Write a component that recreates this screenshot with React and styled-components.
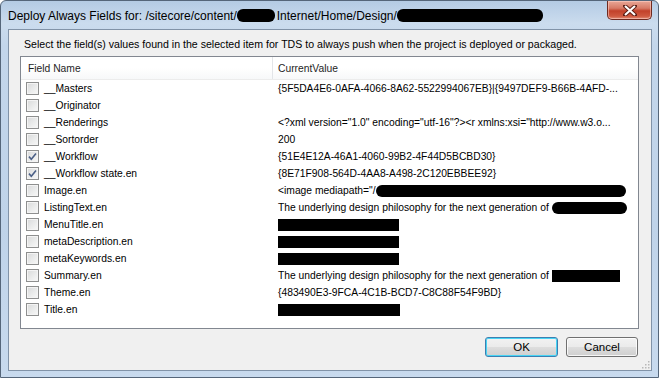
import React from "react";
import styled, { createGlobalStyle } from "styled-components";

const fields = [
  { name: "__Masters", value: ["{5F5DA4E6-0AFA-4066-8A62-5522994067EB}|{9497DEF9-B66B-4AFD-..."] },
  { name: "__Originator", value: [] },
  {
    name: "__Renderings",
    value: ['<?xml version="1.0" encoding="utf-16"?><r xmlns:xsi="http://www.w3.o...'],
  },
  { name: "__Sortorder", value: ["200"] },
  { name: "__Workflow", checked: true, value: ["{51E4E12A-46A1-4060-99B2-4F44D5BCBD30}"] },
  { name: "__Workflow state.en", checked: true, value: ["{8E71F908-564D-4AA8-A498-2C120EBBEE92}"] },
  { name: "Image.en", value: ['<image mediapath="/', { redact: 250, round: true }] },
  {
    name: "ListingText.en",
    value: ["The underlying design philosophy for the next generation of ", { redact: 75, round: true }],
  },
  { name: "MenuTitle.en", value: [{ redact: 121 }] },
  { name: "metaDescription.en", value: [{ redact: 121 }] },
  { name: "metaKeywords.en", value: [{ redact: 121 }] },
  {
    name: "Summary.en",
    value: ["The underlying design philosophy for the next generation of ", { redact: 68 }],
  },
  { name: "Theme.en", value: ["{483490E3-9FCA-4C1B-BCD7-C8C88F54F9BD}"] },
  { name: "Title.en", value: [{ redact: 122 }] },
];

const renderParts = (parts) =>
  parts.map((part, i) =>
    typeof part === "string" ? (
      <span key={i}>{part}</span>
    ) : (
      <Redaction key={i} $width={part.redact} $round={part.round} />
    )
  );

const CheckBox = ({ checked }) => (
  <Check>
    {checked ? (
      <svg width="11" height="11" viewBox="0 0 11 11">
        <path d="M2 5.6 L4.3 8.2 L9 2.4" fill="none" stroke="#4b5f86" strokeWidth="1.6" />
      </svg>
    ) : null}
  </Check>
);

export default function App() {
  return (
    <>
      <GlobalStyle />
      <Window>
        <TitleBar>
          <TitleText>
            Deploy Always Fields for: /sitecore/content/
            <Redaction $width={38} $round $tall />
            Internet/Home/Design/
            <Redaction $width={146} $round $tall />
          </TitleText>
          <CloseButton>
            <svg width="14" height="11" viewBox="0 0 14 11">
              <path
                d="M2 1 L12 10 M12 1 L2 10"
                stroke="#5a1d14"
                strokeWidth="4"
                strokeLinecap="round"
              />
              <path d="M2 1 L12 10 M12 1 L2 10" stroke="#ffffff" strokeWidth="2.2" />
            </svg>
          </CloseButton>
        </TitleBar>
        <Client>
          <Instruction>
            Select the field(s) values found in the selected item for TDS to always push when the
            project is deployed or packaged.
          </Instruction>
          <ListView>
            <HeaderRow>
              <HeaderCell>Field Name</HeaderCell>
              <HeaderCell $divider>CurrentValue</HeaderCell>
            </HeaderRow>
            {fields.map((field) => (
              <Row key={field.name}>
                <NameCell>
                  <CheckBox checked={field.checked} />
                  <span>{field.name}</span>
                </NameCell>
                <ValueCell>{renderParts(field.value)}</ValueCell>
              </Row>
            ))}
          </ListView>
          <ButtonRow>
            <DialogButton $default>OK</DialogButton>
            <DialogButton>Cancel</DialogButton>
          </ButtonRow>
          <Grip>
            <svg width="9" height="9" viewBox="0 0 9 9" fill="#b8b8b8">
              <rect x="7" y="1" width="1.5" height="1.5" />
              <rect x="4" y="4" width="1.5" height="1.5" />
              <rect x="7" y="4" width="1.5" height="1.5" />
              <rect x="1" y="7" width="1.5" height="1.5" />
              <rect x="4" y="7" width="1.5" height="1.5" />
              <rect x="7" y="7" width="1.5" height="1.5" />
            </svg>
          </Grip>
        </Client>
      </Window>
    </>
  );
}

const GlobalStyle = createGlobalStyle`
  html, body {
    margin: 0;
    padding: 0;
    overflow: hidden;
    background: #ffffff;
  }
  * {
    box-sizing: border-box;
  }
`;

const Window = styled.div`
  width: 659px;
  height: 378px;
  display: flex;
  flex-direction: column;
  padding: 0 6px 6px 7px;
  border: 1px solid #55667a;
  border-radius: 6px 6px 0 0;
  background: linear-gradient(
    180deg,
    #b4cbe4 0%,
    #cbdcee 6%,
    #c3d6eb 12%,
    #bfd3e9 60%,
    #c8daee 100%
  );
  font-family: "Liberation Sans", Arial, sans-serif;
`;

const TitleBar = styled.div`
  height: 28px;
  display: flex;
  justify-content: space-between;
  align-items: center;
`;

const TitleText = styled.div`
  font-size: 12px;
  color: #000000;
  white-space: nowrap;
  padding-top: 1px;
  display: flex;
  align-items: center;

  & > span:first-of-type {
    margin-right: 2px;
  }
`;

const CloseButton = styled.div`
  align-self: flex-start;
  width: 45px;
  height: 19px;
  display: flex;
  align-items: center;
  justify-content: center;
  border: 1px solid #6e2a20;
  border-top: none;
  border-radius: 0 0 5px 5px;
  background: linear-gradient(
    180deg,
    #e9a797 0%,
    #d77a66 40%,
    #c2412a 55%,
    #cf5a40 85%,
    #e0907a 100%
  );
  box-shadow: inset 0 0 0 1px rgba(255, 210, 200, 0.55);
`;

const Client = styled.div`
  position: relative;
  flex: 1;
  display: flex;
  flex-direction: column;
  padding: 8px 12px 13px 11px;
  background: #f0f0f0;
  border: 1px solid #8193a8;
`;

const Instruction = styled.div`
  font-size: 10.6px;
  line-height: 13px;
  color: #000000;
  padding-left: 4px;
  margin-bottom: 5px;
  white-space: nowrap;
`;

const ListView = styled.div`
  flex: 1;
  background: #ffffff;
  border: 1px solid #828790;
  font-size: 10.3px;
  color: #000000;
  overflow: hidden;
`;

const HeaderRow = styled.div`
  display: grid;
  grid-template-columns: 251px 1fr;
  height: 23px;
  background: linear-gradient(180deg, #ffffff 0%, #ffffff 50%, #f7f8f9 100%);
  border-bottom: 1px solid #ececec;
`;

const HeaderCell = styled.div`
  display: flex;
  align-items: center;
  padding-left: ${(p) => (p.$divider ? "5px" : "7px")};
  border-left: ${(p) => (p.$divider ? "1px solid #e3e5e8" : "none")};
  color: #1e1e1e;
`;

const Row = styled.div`
  display: grid;
  grid-template-columns: 251px 1fr;
  height: 17px;
`;

const NameCell = styled.div`
  display: flex;
  align-items: center;
  gap: 5px;
  padding-left: 5px;
  white-space: nowrap;
`;

const ValueCell = styled.div`
  display: flex;
  align-items: center;
  padding-left: 6px;
  white-space: pre;
  overflow: hidden;
`;

const Check = styled.div`
  width: 13px;
  height: 13px;
  flex: none;
  display: flex;
  align-items: center;
  justify-content: center;
  border: 1px solid #8e8f8f;
  background: linear-gradient(135deg, #d8d9da 0%, #eceded 60%, #f8f8f8 100%);
  box-shadow: inset 0 0 0 1px #f4f4f4;
`;

const Redaction = styled.span`
  display: inline-block;
  width: ${(p) => p.$width}px;
  height: ${(p) => (p.$tall ? 13 : 12)}px;
  background: #000000;
  border-radius: ${(p) => (p.$round ? "6px" : "0")};
  flex: none;
`;

const ButtonRow = styled.div`
  display: flex;
  justify-content: flex-end;
  gap: 8px;
  margin-top: 8px;
  padding-right: 1px;
`;

const DialogButton = styled.div`
  width: ${(p) => (p.$default ? 73 : 72)}px;
  height: 20px;
  display: flex;
  align-items: center;
  justify-content: center;
  font-size: 11.5px;
  color: #000000;
  border-radius: 3px;
  border: 1px solid ${(p) => (p.$default ? "#3c7fb1" : "#707070")};
  background: linear-gradient(
    180deg,
    #f2f2f2 0%,
    #ebebeb 48%,
    #dddddd 52%,
    #cfcfcf 100%
  );
  box-shadow: inset 0 0 0 1px
    ${(p) => (p.$default ? "#48d4f4" : "rgba(255, 255, 255, 0.8)")};
`;

const Grip = styled.div`
  position: absolute;
  right: 1px;
  bottom: 1px;
  width: 9px;
  height: 9px;
  display: flex;
`;
